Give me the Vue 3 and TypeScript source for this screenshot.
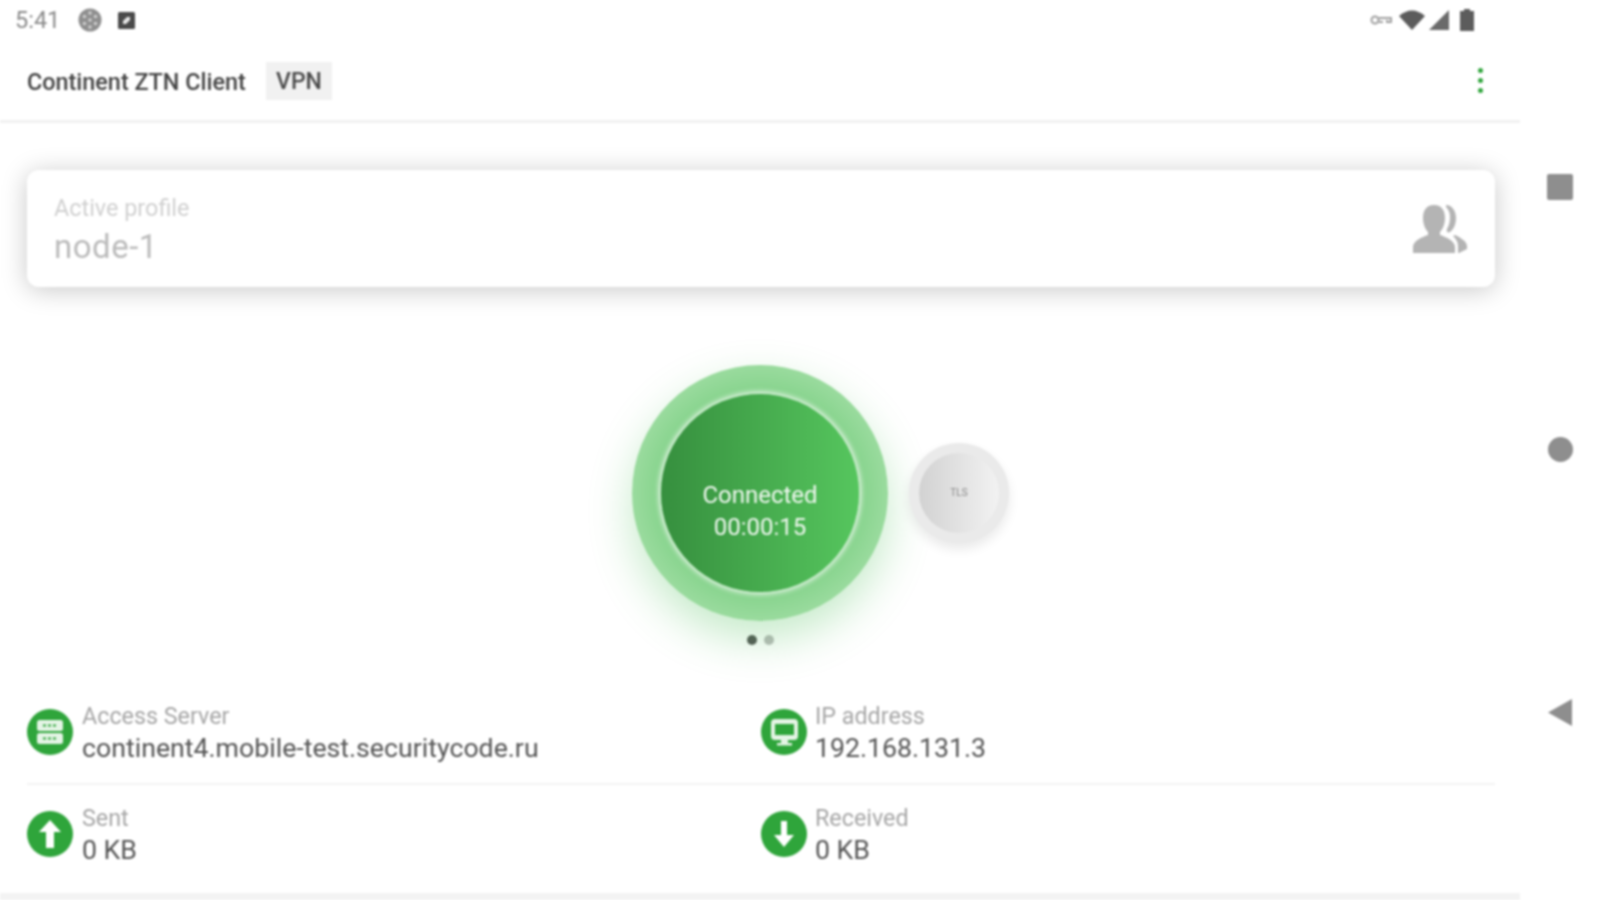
<script setup lang="ts">
interface Info { label: string; value: string; icon: 'server' | 'monitor' | 'up' | 'down' }
const rows: Info[] = [
  { label: 'Access Server', value: 'continent4.mobile-test.securitycode.ru', icon: 'server' },
  { label: 'IP address', value: '192.168.131.3', icon: 'monitor' },
  { label: 'Sent', value: '0 KB', icon: 'up' },
  { label: 'Received', value: '0 KB', icon: 'down' },
]
</script>

<template>
  <div class="screen">
    <div class="main">
      <div class="status">
        <span class="time">5:41</span>
        <svg class="st-globe" width="24" height="24" viewBox="0 0 24 24">
          <circle cx="12" cy="12" r="11.5" fill="#8f8f8f" />
          <g fill="#cfcfcf">
            <circle cx="12" cy="5" r="1.8" /><circle cx="6.5" cy="8.5" r="1.8" /><circle cx="17.5" cy="8.5" r="1.8" />
            <circle cx="12" cy="12" r="1.8" /><circle cx="6.5" cy="15.5" r="1.8" /><circle cx="17.5" cy="15.5" r="1.8" /><circle cx="12" cy="19" r="1.8" />
          </g>
        </svg>
        <svg class="st-note" width="17" height="17" viewBox="0 0 17 17">
          <rect width="17" height="17" rx="1.5" fill="#4a4a4a" />
          <path d="M5 12 L5 9 L9 5 L12 5 L12 8 L8 12 Z" fill="#e8e8e8" />
        </svg>
        <span class="spacer"></span>
        <svg width="22" height="14" viewBox="0 0 22 14" fill="none" stroke="#a0a0a0" stroke-width="2">
          <circle cx="5" cy="7" r="3.5" /><path d="M9 5 H21 V9 H17 V7 M13 9 H9" />
        </svg>
        <svg class="st-wifi" width="26" height="20" viewBox="0 0 26 20"><path d="M0 6 Q13 -5 26 6 L13 20 Z" fill="#5c5c5c" /></svg>
        <svg class="st-signal" width="20" height="20" viewBox="0 0 20 20"><path d="M0 20 L20 0 V20 Z" fill="#6a6a6a" /></svg>
        <svg class="st-batt" width="14" height="22" viewBox="0 0 14 22"><path d="M4 2 V0 H10 V2 H14 V22 H0 V2 Z" fill="#5c5c5c" /></svg>
      </div>

      <header class="toolbar">
        <span class="title">Continent ZTN Client</span>
        <span class="chip">VPN</span>
        <span class="spacer"></span>
        <span class="menu"><i></i><i></i><i></i></span>
      </header>

      <section class="card">
        <div class="card-text">
          <div class="card-label">Active profile</div>
          <div class="card-value">node-1</div>
        </div>
        <svg class="people" width="54" height="48" viewBox="0 0 54 48" fill="#b4b4b4">
          <path d="M21 0 C29 0 32 6 32 13 C32 20 29 25 27 27 V30 C33 32 42 36 42 42 V48 H0 V42 C0 36 9 32 15 30 V27 C13 25 10 20 10 13 C10 6 13 0 21 0 Z" />
          <path d="M33 0 C39 0 43 6 43 13 C43 20 40 25 37 27 C35 28 33 27 34 24 C36 20 37 17 37 12 C37 7 35 4 33 2 Z" />
          <path d="M42 30 C46 32 54 36 54 41 V44 L46 48 H45 V41 C45 36 42 33 40 31 Z" />
        </svg>
      </section>

      <section class="stage">
        <div class="power">
          <div class="power-inner">
            <span>Connected</span>
            <span>00:00:15</span>
          </div>
          <div class="peek"><div class="peek-inner">TLS</div></div>
        </div>
        <div class="dots"><i class="on"></i><i></i></div>
      </section>

      <section class="info">
        <div v-for="r in rows" :key="r.label" class="cell">
          <span class="badge">
            <svg width="46" height="46" viewBox="0 0 46 46">
              <circle cx="23" cy="23" r="23" fill="#2fa53b" />
              <template v-if="r.icon === 'server'">
                <rect x="10" y="11" width="26" height="11" rx="2.5" fill="#e4f4e5" />
                <rect x="10" y="24" width="26" height="11" rx="2.5" fill="#e4f4e5" />
                <path d="M16 16.5 H30 M16 29.5 H30" stroke="#2fa53b" stroke-width="2" stroke-dasharray="3 2" />
              </template>
              <template v-else-if="r.icon === 'monitor'">
                <rect x="10" y="10" width="27" height="21" rx="4" fill="#e4f4e5" />
                <rect x="14" y="15" width="19" height="11" fill="#2fa53b" />
                <rect x="20" y="31" width="7" height="3" fill="#e4f4e5" />
                <rect x="16" y="34" width="15" height="2.5" fill="#e4f4e5" />
              </template>
              <template v-else-if="r.icon === 'up'">
                <path d="M23 9 L34 21 H27 V37 H19 V21 H12 Z" fill="#fff" />
              </template>
              <template v-else>
                <path d="M23 36 L13 24 H20 V10 H26 V24 H33 Z" fill="#fff" />
              </template>
            </svg>
          </span>
          <div class="cell-text">
            <div class="cell-label">{{ r.label }}</div>
            <div class="cell-value">{{ r.value }}</div>
          </div>
        </div>
      </section>
      <div class="foot"></div>
    </div>

    <nav class="nav">
      <span class="nav-square"></span>
      <span class="nav-circle"></span>
      <svg width="24" height="27" viewBox="0 0 24 27"><path d="M0 13.5 L24 0 V27 Z" fill="#8e8e8e" /></svg>
    </nav>
  </div>
</template>

<style>
html, body { margin: 0; background: #fff; }
</style>

<style scoped>
.screen {
  width: 1600px;
  height: 900px;
  display: flex;
  background: #fff;
  overflow: hidden;
  font-family: Roboto, "Liberation Sans", sans-serif;
  filter: blur(0.9px);
}
.main { width: 1520px; display: flex; flex-direction: column; }
.spacer { flex: 1; }

.status {
  height: 40px;
  flex: none;
  display: flex;
  align-items: center;
  padding: 0 46px 0 15px;
  box-sizing: border-box;
}
.time { font-size: 23.5px; color: #8a8a8a; width: 63px; }
.st-note { margin-left: 16px; }
.st-wifi { margin-left: 7px; }
.st-signal { margin-left: 4px; }
.st-batt { margin-left: 11px; }

.toolbar {
  height: 83px;
  flex: none;
  box-sizing: border-box;
  display: flex;
  align-items: center;
  padding: 2px 37px 0 27px;
  border-bottom: 3px solid #f1f1f1;
}
.title { font-size: 23.4px; color: #444; font-weight: 500; width: 239px; white-space: nowrap; padding-top: 1px; }
.chip {
  background: #f1f1f1;
  color: #4a4a4a;
  font-size: 23px;
  font-weight: 500;
  width: 66px;
  height: 38px;
  line-height: 39px;
  text-align: center;
}
.menu { display: flex; flex-direction: column; gap: 5px; margin-top: -2px; }
.menu i { width: 5px; height: 5px; border-radius: 50%; background: #2fa53b; display: block; }

.card {
  margin: 47px 25px 0 27px;
  height: 117px;
  flex: none;
  box-sizing: border-box;
  border-radius: 12px;
  background: #fff;
  box-shadow: 0 3px 26px rgba(0, 0, 0, 0.22);
  padding: 5px 28px 0 27px;
  display: flex;
  align-items: center;
  justify-content: space-between;
}
.card-label { font-size: 23.4px; color: #d0d0d0; line-height: 30px; }
.card-value { font-size: 33px; color: #bbb; line-height: 44px; letter-spacing: 0.5px; margin-top: 2px; }
.people { margin-top: -5px; }

.stage {
  display: flex;
  flex-direction: column;
  align-items: center;
  padding-top: 78px;
  height: 413px;
  flex: none;
  box-sizing: border-box;
}
.power {
  position: relative;
  flex: none;
  width: 256px;
  height: 256px;
  border-radius: 50%;
  background: radial-gradient(circle closest-side, #88d48e 80%, #9adb9e 100%);
  box-shadow: 0 18px 44px rgba(76, 190, 86, 0.32);
  display: flex;
  align-items: center;
  justify-content: center;
}
.power-inner {
  width: 198px;
  height: 198px;
  box-sizing: border-box;
  padding-top: 35px;
  border-radius: 50%;
  background: linear-gradient(90deg, #368f3e, #56c65e);
  box-shadow: 0 0 4px 3px #d3eed5;
  color: #f0f8f0;
  font-size: 24px;
  line-height: 32px;
  display: flex;
  flex-direction: column;
  align-items: center;
  justify-content: center;
}
.peek {
  position: absolute;
  left: 277px;
  top: 78px;
  width: 100px;
  height: 100px;
  border-radius: 50%;
  background: #eaeaea;
  box-shadow: 0 6px 12px rgba(0, 0, 0, 0.09);
  display: flex;
  align-items: center;
  justify-content: center;
}
.peek-inner {
  width: 80px;
  height: 80px;
  border-radius: 50%;
  background: linear-gradient(90deg, #d2d2d2, #f2f2f2);
  color: #888;
  font-size: 10px;
  line-height: 80px;
  text-align: center;
}
.dots { display: flex; gap: 7px; margin-top: 14px; }
.dots i { width: 10px; height: 10px; border-radius: 50%; background: #bbb; display: block; }
.dots i.on { background: #555; }

.info {
  margin: 0 25px 0 27px;
  display: grid;
  grid-template-columns: 1fr 1fr;
}
.cell {
  display: flex;
  align-items: center;
  gap: 9px;
  height: 64px;
}
.cell:nth-child(even) { gap: 8px; }
.cell:nth-child(-n + 2) { border-bottom: 2px solid #f3f3f3; padding-bottom: 19px; }
.cell:nth-child(n + 3) { padding-top: 17px; }
.badge { display: flex; }
.cell-text { padding-top: 1px; }
.cell-label { font-size: 23.3px; color: #a6a6a6; line-height: 31px; white-space: nowrap; }
.cell-value { font-size: 26.7px; color: #555; line-height: 33px; white-space: nowrap; }
.foot { margin-top: auto; height: 7px; flex: none; background: #f3f3f3; }

.nav {
  width: 80px;
  position: relative;
  display: flex;
  flex-direction: column;
  align-items: center;
}
.nav-square { width: 26px; height: 26px; background: #8e8e8e; border-radius: 2px; margin-top: 174px; }
.nav-circle { width: 25px; height: 25px; background: #8e8e8e; border-radius: 50%; margin-top: 237px; }
.nav svg { margin-top: 237px; }
</style>
